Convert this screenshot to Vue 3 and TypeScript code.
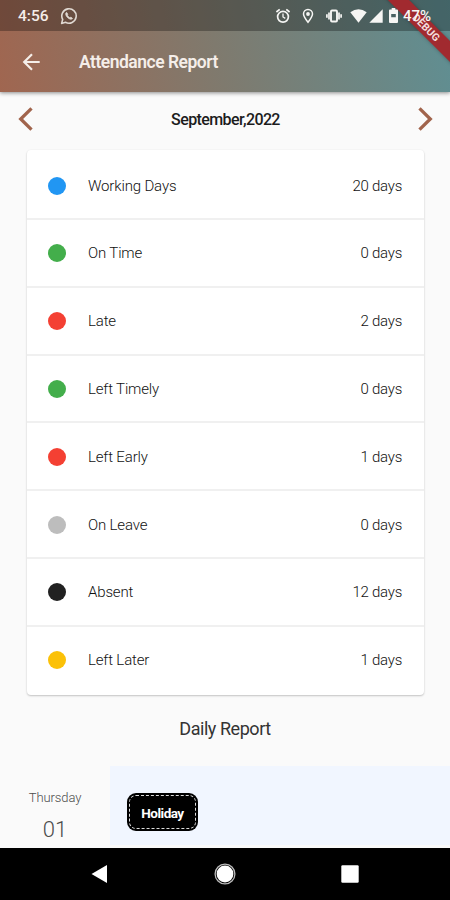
<script setup lang="ts">
interface Stat {
  label: string
  days: number
  tone: string
}

const stats: Stat[] = [
  { label: 'Working Days', days: 20, tone: 'blue' },
  { label: 'On Time', days: 0, tone: 'green' },
  { label: 'Late', days: 2, tone: 'red' },
  { label: 'Left Timely', days: 0, tone: 'green' },
  { label: 'Left Early', days: 1, tone: 'red' },
  { label: 'On Leave', days: 0, tone: 'grey' },
  { label: 'Absent', days: 12, tone: 'black' },
  { label: 'Left Later', days: 1, tone: 'amber' },
]
</script>

<template>
  <div class="screen">
    <header class="top">
      <div class="debug"><span>DEBUG</span></div>
      <div class="status">
        <span class="clock">4:56</span>
        <svg class="whatsapp" width="18" height="18" viewBox="0 0 18 18" fill="none" stroke="currentColor">
          <path d="M1.6 16.4 2.7 12.5A7.2 7.2 0 1 1 5.5 15.3Z" stroke-width="1.6" stroke-linejoin="round" />
          <path d="M6.5 5.3C5 6.4 5.6 8.6 7.4 10.4S11.4 12.9 12.6 11.5L10.9 10.1 9.9 10.8Q8.1 9.9 7.3 8.1L7.9 7.2Z" fill="currentColor" stroke-width=".7" stroke-linejoin="round" />
        </svg>
        <div class="indicators">
          <svg width="16" height="16" viewBox="0 0 16 16" fill="none" stroke="currentColor" stroke-width="1.7">
            <circle cx="8" cy="8.8" r="5.4" />
            <path d="M8 5.6V9l2.300 1.400" stroke-width="1.3" />
            <path d="M1.400 4 4.700 1.300M14.600 4 11.300 1.300" />
          </svg>
          <svg width="12" height="16" viewBox="0 0 12 16" fill="none" stroke="currentColor" stroke-width="1.5">
            <path d="M6 14.300C3.500 11.100 1.500 8.500 1.500 6a4.500 4.500 0 0 1 9 0C10.500 8.500 8.500 11.100 6 14.300Z" />
            <circle cx="6" cy="6" r="1.9" fill="currentColor" stroke="none" />
          </svg>
          <svg width="16" height="14" viewBox="0 0 16 14" fill="none" stroke="currentColor">
            <rect x="5" y="1.500" width="6" height="11" rx="1" stroke-width="1.9" />
            <path d="M3 3.500v7M13 3.500v7" stroke-width="1.7" />
            <path d="M.9 5.300v3.400M15.100 5.300v3.400" stroke-width="1.7" />
          </svg>
          <svg width="17" height="14" viewBox="0 0 17 14"><path d="M.3 3.200Q8.500-2.800 16.700 3.200L8.500 13.700Z" fill="currentColor" /></svg>
          <svg width="14" height="14" viewBox="0 0 14 14"><path d="M13.700.3V13.700H.3Z" fill="currentColor" /></svg>
          <svg width="9" height="15" viewBox="0 0 9 15" fill="currentColor" fill-rule="evenodd">
            <path d="M2.700 0h3.600v1.500H8a1 1 0 0 1 1 1V14a1 1 0 0 1-1 1H1a1 1 0 0 1-1-1V2.500a1 1 0 0 1 1-1h1.700ZM2.200 6v3.200h4.600V6Z" />
          </svg>
          <span class="battery">47%</span>
        </div>
      </div>
      <div class="appbar">
        <svg width="18" height="18" viewBox="0 0 18 18" fill="none" stroke="currentColor" stroke-width="2.2">
          <path d="M17.700 9H2M10 1.300 2.200 9l7.800 7.700" />
        </svg>
        <h1>Attendance Report</h1>
      </div>
    </header>

    <main>
      <div class="month">
        <svg width="16" height="26" viewBox="0 0 16 26"><path d="M13.500 2.300 2.700 13l10.800 10.700" /></svg>
        <span>September,2022</span>
        <svg width="16" height="26" viewBox="0 0 16 26"><path d="M2.500 2.300 13.300 13 2.500 23.700" /></svg>
      </div>

      <ul class="card">
        <li v-for="s in stats" :key="s.label">
          <i :class="['dot', s.tone]"></i>
          <span class="label">{{ s.label }}</span>
          <span class="value">{{ s.days }} days</span>
        </li>
      </ul>

      <h2>Daily Report</h2>

      <section class="day">
        <div class="date">
          <span class="weekday">Thursday</span>
          <span class="number">01</span>
        </div>
        <div class="detail">
          <div class="badge"><span>Holiday</span></div>
        </div>
      </section>
    </main>

    <nav>
      <svg width="17" height="20" viewBox="0 0 17 20"><path d="M16 1V19L.5 10Z" fill="#fff" /></svg>
      <svg width="22" height="22" viewBox="0 0 22 22">
        <circle cx="11" cy="11" r="9.900" fill="none" stroke="#bbb" stroke-width="1.300" />
        <circle cx="11" cy="11" r="8.400" fill="#fff" />
      </svg>
      <svg width="18" height="18" viewBox="0 0 18 18"><rect x=".3" y=".3" width="17.400" height="17.400" rx="1.200" fill="#fff" /></svg>
    </nav>
  </div>
</template>

<style>
body {
  margin: 0;
}
</style>

<style scoped>
.screen {
  width: 450px;
  height: 900px;
  display: flex;
  flex-direction: column;
  overflow: hidden;
  background: #fafafa;
  font-family: Roboto, "Liberation Sans", sans-serif;
}
svg {
  display: block;
  flex: none;
}
.top {
  position: relative;
  flex: none;
  height: 92px;
  color: #f5eee9;
  background: linear-gradient(78deg, #a06650 0%, #7f7a6e 48%, #5f8f93 100%);
  box-shadow: 0 1px 4px rgba(0, 0, 0, 0.45);
}
.status {
  display: flex;
  align-items: center;
  height: 31px;
  padding-left: 18px;
  box-sizing: border-box;
  background: rgba(0, 0, 0, 0.29);
}
.clock {
  width: 42px;
  font-size: 15.5px;
  font-weight: 500;
  line-height: 31px;
  padding-top: 2px;
  box-sizing: border-box;
}
.whatsapp {
  color: #e0d9d2;
}
.indicators {
  position: relative;
  z-index: 2;
  display: flex;
  align-items: center;
  margin-left: 197px;
  color: #f6f6f4;
}
.indicators svg:nth-child(2) { margin-left: 11px; }
.indicators svg:nth-child(3) { margin-left: 12px; }
.indicators svg:nth-child(4) { margin-left: 8px; }
.indicators svg:nth-child(5) { margin-left: 2px; }
.indicators svg:nth-child(6) { margin-left: 6px; }
.battery {
  margin-left: 5px;
  font-size: 15px;
  font-weight: 500;
  line-height: 31px;
  padding-top: 1px;
  height: 31px;
  box-sizing: border-box;
}
.debug {
  position: absolute;
  left: 374px;
  top: 18px;
  width: 100px;
  height: 15px;
  background: #a12a2f;
  box-shadow: 0 0 4px rgba(0, 0, 0, 0.3);
  transform: rotate(45deg);
  color: #f3dcdc;
  font-size: 10.5px;
  font-weight: 700;
  line-height: 15px;
  text-align: center;
  text-indent: 6px;
  z-index: 1;
}
.appbar {
  display: flex;
  align-items: center;
  height: 61px;
  padding-left: 22px;
}
h1 {
  margin: 1px 0 0 39px;
  font-size: 17.5px;
  font-weight: 600;
  line-height: 24px;
  letter-spacing: -0.5px;
}
main {
  flex: 1;
  min-height: 0;
}
.month {
  display: flex;
  justify-content: space-between;
  align-items: center;
  height: 53px;
  padding: 0 17px 0 18px;
  font-size: 16px;
  font-weight: 500;
  letter-spacing: -0.6px;
  color: #1c1c1c;
}
.month span {
  padding-top: 1px;
}
.month path {
  fill: none;
  stroke: #a1644c;
  stroke-width: 3.3;
}
.card {
  list-style: none;
  margin: 5px 26px 0 27px;
  padding: 0;
  height: 545px;
  border-radius: 4px;
  background: #fff;
  box-shadow: 0 1px 2px rgba(0, 0, 0, 0.22), 0 0 2px rgba(0, 0, 0, 0.04);
}
li {
  display: flex;
  align-items: center;
  height: 67.8px;
  padding: 1px 22px 0 21px;
  box-sizing: border-box;
  border-bottom: 2px solid #f0f0f0;
  font-size: 15px;
  font-weight: 300;
  letter-spacing: -0.15px;
  color: #111;
}
li:first-child {
  height: 70px;
  padding-top: 3px;
}
li:last-child {
  border-color: transparent;
}
.dot {
  width: 18px;
  height: 18px;
  border-radius: 50%;
  margin-right: 22px;
}
.blue { background: #2196f3; }
.green { background: #43ae4b; }
.red { background: #f44033; }
.grey { background: #bdbdbd; }
.black { background: #212121; }
.amber { background: #fbc108; }
.label {
  flex: 1;
}
.value {
  letter-spacing: -0.25px;
}
h2 {
  margin: 21px 0 0;
  text-align: center;
  font-size: 18px;
  font-weight: 400;
  line-height: 26px;
  letter-spacing: -0.45px;
  color: #333;
}
.day {
  display: flex;
  margin-top: 24px;
  height: 79px;
}
.date {
  width: 110px;
  display: flex;
  flex-direction: column;
  align-items: center;
  padding-top: 22px;
  box-sizing: border-box;
  font-weight: 300;
  color: #4c4c4c;
}
.weekday {
  font-size: 13px;
  line-height: 20px;
  letter-spacing: -0.1px;
}
.number {
  margin-top: 8px;
  font-size: 22px;
  line-height: 28px;
}
.detail {
  flex: 1;
  padding: 27px 0 0 17px;
  background: #f1f6ff;
}
.badge {
  width: 71px;
  height: 38px;
  padding: 2px;
  box-sizing: border-box;
  border-radius: 9px;
  background: #000;
}
.badge span {
  display: block;
  height: 34px;
  box-sizing: border-box;
  border: 1px dashed #ddd;
  border-radius: 7px;
  text-align: center;
  font-size: 13.5px;
  font-weight: 700;
  line-height: 34px;
  letter-spacing: -0.5px;
  color: #fff;
}
nav {
  flex: none;
  height: 52px;
  display: flex;
  align-items: center;
  justify-content: space-between;
  padding: 0 91px;
  box-sizing: border-box;
  background: #000;
}
</style>
